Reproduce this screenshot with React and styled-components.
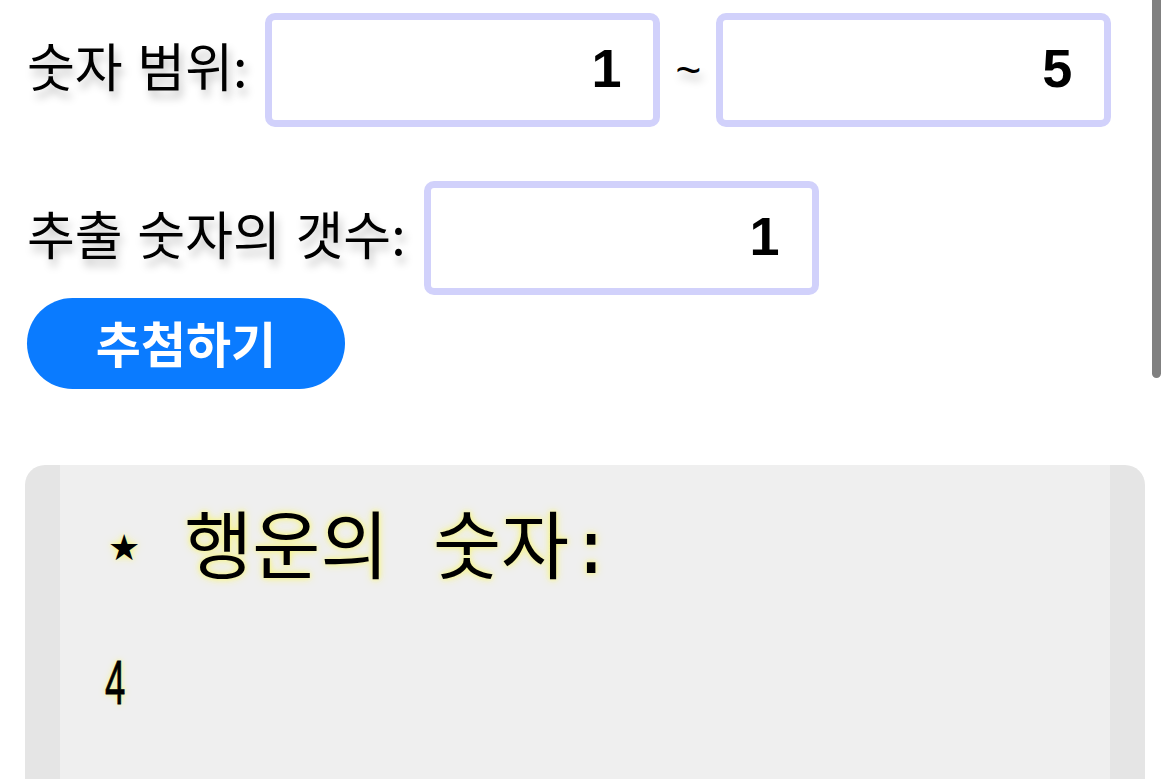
import React from 'react';
import styled, { createGlobalStyle } from 'styled-components';

const GlobalStyle = createGlobalStyle`
  html, body {
    margin: 0;
    padding: 0;
    overflow: hidden;
    background: #fff;
  }
  body {
    font-family: 'Noto Sans CJK KR', 'Noto Sans', sans-serif;
    color: #000;
  }
`;

const Page = styled.div`
  padding: 13px 0 0 27px;
`;

const Row = styled.div`
  display: flex;
  align-items: center;
  gap: ${(p) => p.$gap || 18}px;
  margin-top: ${(p) => p.$top || 0}px;
`;

const Label = styled.label`
  font-size: 52px;
  line-height: 1;
  word-spacing: 3px;
  text-shadow: 3px 7px 9px rgba(0, 0, 0, 0.25);
  padding-bottom: 10px;
  white-space: nowrap;
`;

const Tilde = styled.span`
  font-size: 44px;
  font-family: 'Liberation Sans', sans-serif;
  text-shadow: 3px 7px 9px rgba(0, 0, 0, 0.25);
  margin: 0 -3px;
`;

const NumberInput = styled.input`
  width: 395px;
  height: 114px;
  flex: none;
  box-sizing: border-box;
  border: 7px solid #d1d1fb;
  border-radius: 10px;
  padding: 0 32px 4px 30px;
  text-align: right;
  font-family: 'Liberation Sans', Arial, sans-serif;
  font-weight: 700;
  font-size: 54px;
  color: #000;
  background: #fff;
  outline: none;
`;

const DrawButton = styled.button`
  margin-top: 3px;
  width: 318px;
  height: 91px;
  border: none;
  border-radius: 46px;
  background: #0a7bff;
  color: #fff;
  font-family: 'Noto Sans CJK KR', sans-serif;
  font-weight: 700;
  font-size: 49px;
  padding: 0 0 4px;
  cursor: pointer;
`;

const ResultBox = styled.div`
  margin: 76px 0 0 -2px;
  width: 1120px;
  height: 314px;
  box-sizing: border-box;
  background: #efefef;
  border-left: 35px solid #e5e5e5;
  border-right: 35px solid #e5e5e5;
  border-radius: 20px 20px 0 0;
  padding: 44px 48px 0;
`;

const ResultTitle = styled.h2`
  margin: 0;
  font-family: 'Liberation Mono', 'Noto Sans CJK KR', monospace;
  font-weight: 400;
  font-size: 74px;
  line-height: 1.2;
  text-shadow: 0 0 8px #f6f47a, 0 0 4px #f8f6a0;
  display: flex;
  align-items: center;
  gap: 44px;
`;

const Star = styled.span`
  font-family: 'DejaVu Sans', sans-serif;
  font-size: 36px;
  margin-top: -12px;
`;

const ResultNumber = styled.div`
  margin: 53px 0 0 -3px;
  font-family: 'Liberation Sans', sans-serif;
  font-size: 63px;
  line-height: 1;
  transform: scaleX(0.58);
  transform-origin: left;
  -webkit-text-stroke: 0.8px #000;
  text-shadow: 0 0 8px #f6f47a, 0 0 4px #f8f6a0;
`;

const ScrollThumb = styled.div`
  position: fixed;
  top: 0;
  right: 9px;
  width: 9px;
  height: 378px;
  background: #808080;
  border-radius: 0 0 5px 5px;
`;

export default function App() {
  return (
    <>
      <GlobalStyle />
      <Page>
        <Row>
          <Label>숫자 범위:</Label>
          <NumberInput type="text" defaultValue="1" />
          <Tilde>~</Tilde>
          <NumberInput type="text" defaultValue="5" />
        </Row>
        <Row $top={54}>
          <Label>추출 숫자의 갯수:</Label>
          <NumberInput type="text" defaultValue="1" />
        </Row>
        <DrawButton>추첨하기</DrawButton>
        <ResultBox>
          <ResultTitle>
            <Star>★</Star>
            <span>행운의 숫자:</span>
          </ResultTitle>
          <ResultNumber>4</ResultNumber>
        </ResultBox>
      </Page>
      <ScrollThumb />
    </>
  );
}
